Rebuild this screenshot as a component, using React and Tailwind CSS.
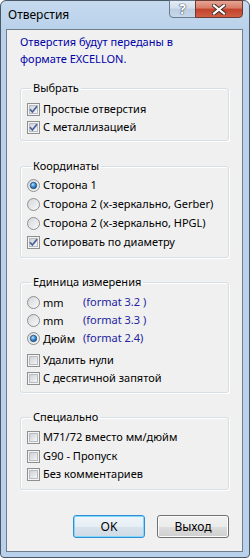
import React from 'react';

const Check = ({ checked }) => (
  <svg width="13" height="13" viewBox="0 0 13 13" className="shrink-0">
    <defs>
      <linearGradient id="cbfill" x1="0" y1="0" x2="1" y2="1">
        <stop offset="0" stopColor="#cbcfd5" />
        <stop offset="1" stopColor="#f7f7f7" />
      </linearGradient>
    </defs>
    <rect x="0.5" y="0.5" width="12" height="12" fill="#f4f4f4" stroke="#8e8f8f" />
    <rect x="2.5" y="2.5" width="8" height="8" fill="url(#cbfill)" stroke="#b9bdc3" />
    {checked && (
      <path d="M3 6.2 L5.4 9 L10 3.2" fill="none" stroke="#4a5f97" strokeWidth="1.7" />
    )}
  </svg>
);

const Radio = ({ checked }) => (
  <svg width="13" height="13" viewBox="0 0 13 13" className="shrink-0">
    <defs>
      <linearGradient id="rbfill" x1="0" y1="0" x2="1" y2="1">
        <stop offset="0" stopColor="#d2d5da" />
        <stop offset="1" stopColor="#fafafa" />
      </linearGradient>
      <radialGradient id="rbdot" cx="0.4" cy="0.35" r="0.7">
        <stop offset="0" stopColor="#b9e4ff" />
        <stop offset="0.5" stopColor="#3a8fd8" />
        <stop offset="1" stopColor="#1b4f8c" />
      </radialGradient>
    </defs>
    <circle cx="6.5" cy="6.5" r="6" fill="url(#rbfill)" stroke="#8e8f8f" />
    {checked && <circle cx="6.5" cy="6.5" r="3.2" fill="url(#rbdot)" stroke="#2b4b6f" strokeWidth="0.8" />}
  </svg>
);

const Row = ({ children, className = '' }) => (
  <div className={`flex h-[18px] items-center gap-[3px] ${className}`}>{children}</div>
);

const Group = ({ title, className = '', children }) => (
  <fieldset
    className={`rounded-[3px] border border-[#d5dfe5] px-[6px] shadow-[inset_1px_1px_0_#fff,1px_1px_0_#fff] ${className}`}
  >
    <legend className="ml-[4px] px-[2px] leading-[14px]">{title}</legend>
    {children}
  </fieldset>
);

const Button = ({ children, primary }) => (
  <button
    className={`h-[23px] w-[72px] rounded-[3px] border text-black ${
      primary
        ? 'border-[#2f8fd6] bg-[linear-gradient(#eef4f9_0%,#e6eef5_50%,#d9e3ec_51%,#cfdae4_100%)] shadow-[inset_0_0_0_1px_#82d8f9]'
        : 'border-[#707070] bg-[linear-gradient(#f2f2f2_0%,#ebebeb_50%,#dddddd_51%,#cfcfcf_100%)] shadow-[inset_0_0_0_1px_#fcfcfc]'
    }`}
  >
    {children}
  </button>
);

export default function App() {
  return (
    <div className="flex h-[558px] w-[250px] flex-col rounded-t-[6px] rounded-b-[4px] border border-[#4a5767] bg-[linear-gradient(#c6daef,#b9d1ea_30px)] font-['Segoe_UI','Noto_Sans','Liberation_Sans',sans-serif] text-[11px] text-black">
      {/* title bar */}
      <div className="flex h-[28px] shrink-0 items-start justify-between">
        <div className="pl-[7px] pt-[6px] text-[12px] leading-[16px]">Отверстия</div>
        <div className="-mt-px mr-[6px] flex">
          <div className="flex h-[18px] w-[27px] items-center justify-center rounded-bl-[4px] border border-[#6b7a8c] bg-[linear-gradient(#e3ebf4_0%,#d2deeb_45%,#bccde1_50%,#c7d7ea_100%)] text-[14px] font-bold leading-none text-white [text-shadow:0_0_1px_#3a4a5c,0_0_1px_#3a4a5c,0_0_1px_#3a4a5c]">
            ?
          </div>
          <div className="-ml-px flex h-[18px] w-[48px] items-center justify-center rounded-br-[4px] border border-[#6b3a33] bg-[linear-gradient(#e6a595_0%,#d87b66_45%,#c2412a_50%,#cf5f44_100%)]">
            <svg width="14" height="11" viewBox="0 0 14 11">
              <path d="M2 1.5 L12 9.5 M12 1.5 L2 9.5" stroke="#3d2b28" strokeWidth="4" strokeLinecap="square" />
              <path d="M2 1.5 L12 9.5 M12 1.5 L2 9.5" stroke="#ffffff" strokeWidth="2.2" strokeLinecap="square" />
            </svg>
          </div>
        </div>
      </div>

      {/* client area */}
      <div className="mb-[5px] ml-[5px] mr-[6px] flex flex-1 flex-col border border-[#6f7d8d] bg-[#f0f0f0] px-[13px]">
        <p className="mt-[3px] leading-[17px] text-[#0000a8]">
          Отверстия будут переданы в
          <br />
          формате EXCELLON.
        </p>

        <Group title="Выбрать" className="mt-[14px] pb-[4px] pt-[5px]">
          <Row><Check checked />Простые отверстия</Row>
          <Row><Check checked />С металлизацией</Row>
        </Group>

        <Group title="Координаты" className="mt-[18px] pb-[5px] pt-[3px]">
          <Row className="h-[19px]"><Radio checked />Сторона 1</Row>
          <Row className="h-[19px]"><Radio />Сторона 2 (x-зеркально, Gerber)</Row>
          <Row className="h-[19px]"><Radio />Сторона 2 (x-зеркально, HPGL)</Row>
          <Row className="h-[19px]"><Check checked />Сотировать по диаметру</Row>
        </Group>

        <Group title="Единица измерения" className="mt-[17px] pb-[5px] pt-[4px]">
          <Row><Radio /><span className="w-[37px] pt-[2px]">mm</span><span className="text-[#2323a0]">(format 3.2 )</span></Row>
          <Row><Radio /><span className="w-[37px] pt-[2px]">mm</span><span className="text-[#2323a0]">(format 3.3 )</span></Row>
          <Row><Radio checked /><span className="w-[37px] pt-[2px]">Дюйм</span><span className="text-[#2323a0]">(format 2.4)</span></Row>
          <Row className="mt-[4px]"><Check />Удалить нули</Row>
          <Row><Check />С десятичной запятой</Row>
        </Group>

        <Group title="Специально" className="mt-[17px] pb-[5px] pt-[4px]">
          <Row className="h-[19px]"><Check />M71/72 вместо мм/дюйм</Row>
          <Row><Check />G90 - Пропуск</Row>
          <Row className="h-[19px]"><Check />Без комментариев</Row>
        </Group>

        <div className="mt-[25px] flex justify-end gap-[12px] text-[12px]">
          <Button primary>OK</Button>
          <Button>Выход</Button>
        </div>
      </div>
    </div>
  );
}
